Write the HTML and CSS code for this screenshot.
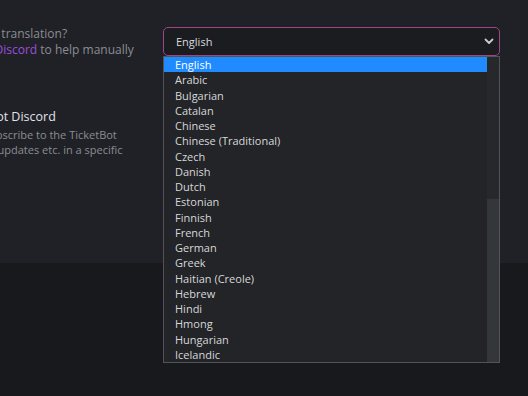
FILE: index.html
```html
<!DOCTYPE html>
<html lang="en">
<head>
  <meta charset="UTF-8" />
  <meta name="viewport" content="width=device-width, initial-scale=1.0"/>
  <title>TicketBot - Settings</title>
  <link rel="stylesheet" href="styles.css">
</head>
<body>
  <section class="settings">
    <div class="row">
      <div class="info">
        <p class="desc">Incorrect translation?<br>Join our <a href="#">Discord</a> to help manually</p>
      </div>
      <div class="field">
        <div class="select">
          <span>English</span>
          <svg class="chevron" width="10" height="7" viewBox="0 0 10 7"><path d="M1.5 1.5 L5 5 L8.5 1.5" fill="none" stroke="#c9cbd0" stroke-width="1.8" stroke-linecap="round" stroke-linejoin="round"/></svg>
        </div>

        <!-- open dropdown -->
        <div class="options">
          <ul class="option-list">
            <li class="selected">English</li>
            <li>Arabic</li>
            <li>Bulgarian</li>
            <li>Catalan</li>
            <li>Chinese</li>
            <li>Chinese (Traditional)</li>
            <li>Czech</li>
            <li>Danish</li>
            <li>Dutch</li>
            <li>Estonian</li>
            <li>Finnish</li>
            <li>French</li>
            <li>German</li>
            <li>Greek</li>
            <li>Haitian (Creole)</li>
            <li>Hebrew</li>
            <li>Hindi</li>
            <li>Hmong</li>
            <li>Hungarian</li>
            <li>Icelandic</li>
          </ul>
          <div class="scrollbar"><div class="thumb"></div></div>
        </div>
      </div>
    </div>

    <div class="row second">
      <div class="info">
        <h3>TicketBot Discord</h3>
        <p class="desc small">Subscribe to the TicketBot<br>all updates etc. in a specific</p>
      </div>
    </div>
  </section>

  <footer class="bottom"></footer>
</body>
</html>
```

FILE: styles.css
```css
body {
  margin: 0;
  font-family: 'Open Sans', sans-serif;
  background-color: #18191c;
  color: #e4e5e8;
  overflow: hidden;
  height: 396px;
}

.settings {
  height: 263px;
  background-color: #1f2126;
  padding: 27px 28px 0 0;
  box-sizing: border-box;
}

.row {
  display: flex;
  align-items: flex-start;
  gap: 14px;
}

.row.second {
  margin-top: 50px;
}

.info {
  flex: 1;
  margin-left: -52px;
}

.row:first-child .info {
  margin-top: -1px;
}

.second .info {
  margin-left: -17px;
}

.desc {
  margin: 0;
  font-size: 12px;
  line-height: 16px;
  color: #8b8d93;
}

.desc.small {
  font-size: 11px;
  line-height: 15px;
}

.desc a {
  color: #9d4edd;
  text-decoration: none;
}

h3 {
  margin: 0 0 1px -29px;
  font-size: 12.5px;
  line-height: 18px;
  font-weight: normal;
  color: #e2e3e6;
}

.field {
  position: relative;
  width: 337px;
}

.select {
  height: 29px;
  box-sizing: border-box;
  border: 1px solid #9c4685;
  border-radius: 5px;
  background-color: #1b1c20;
  display: flex;
  align-items: center;
  justify-content: space-between;
  padding: 0 5px 0 12px;
  font-size: 11px;
  color: #d9dadd;
}

.options {
  position: absolute;
  top: 29px;
  left: 0;
  width: 337px;
  height: 307px;
  box-sizing: border-box;
  border: 1px solid #505357;
  background-color: #222427;
  display: flex;
  z-index: 10;
}

.option-list {
  list-style: none;
  margin: 0;
  padding: 0;
  flex: 1;
}

.option-list li {
  height: 15.25px;
  line-height: 15.25px;
  padding-left: 11px;
  font-size: 11px;
  color: #d6d7da;
  white-space: nowrap;
}

.option-list li.selected {
  background-color: #1f8bff;
  color: #ffffff;
}

.scrollbar {
  width: 12px;
  background-color: #26282b;
  display: flex;
  flex-direction: column;
  justify-content: flex-end;
}

.thumb {
  height: 163px;
  background-color: #34373a;
}
```
